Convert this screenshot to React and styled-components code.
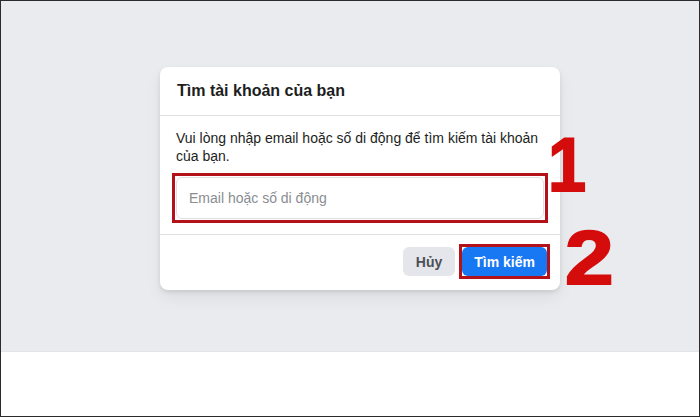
import React from 'react';
import styled, { createGlobalStyle } from 'styled-components';

const GlobalStyle = createGlobalStyle`
  html, body {
    margin: 0;
    padding: 0;
    background: #fff;
  }
  body {
    font-family: "Liberation Sans", Arial, Helvetica, sans-serif;
  }
`;

const Frame = styled.div`
  width: 700px;
  height: 417px;
  box-sizing: border-box;
  border: 1px solid #2b2b2b;
  display: flex;
  flex-direction: column;
  overflow: hidden;
`;

const Stage = styled.div`
  height: 351px;
  background: #e9ebee;
  border-bottom: 1px solid #e2e4e8;
  display: flex;
  justify-content: center;
  align-items: flex-start;
  padding: 66px 0 0 20px;
  box-sizing: border-box;
`;

const Blank = styled.div`
  flex: 1;
  background: #fff;
`;

const Anchor = styled.div`
  position: relative;
`;

const Card = styled.div`
  width: 400px;
  background: #fff;
  border-radius: 8px;
  box-shadow: 0 2px 4px rgba(0, 0, 0, 0.1), 0 8px 16px rgba(0, 0, 0, 0.06);
`;

const Header = styled.div`
  height: 48px;
  padding: 0 17px;
  display: flex;
  align-items: center;
  border-bottom: 1px solid #dddfe2;
`;

const Title = styled.h2`
  margin: 0;
  font-size: 16px;
  font-weight: bold;
  color: #1c1e21;
`;

const Body = styled.div`
  padding: 13px 16px 15px;
  border-bottom: 1px solid #dddfe2;
`;

const Text = styled.p`
  margin: 0 0 12px;
  font-size: 14px;
  line-height: 18px;
  color: #1c1e21;
`;

const Highlight = styled.div`
  border: 3px solid ${p => p.$color || '#b3121b'};
  padding: ${p => p.$gap || '1px'};
  margin: ${p => p.$out || '-4px'};
`;

const Input = styled.input`
  display: block;
  width: 100%;
  box-sizing: border-box;
  height: 42px;
  padding: 0 12px;
  font-family: inherit;
  font-size: 14px;
  color: #1c1e21;
  border: 1px solid #dddfe2;
  border-radius: 6px;
  outline: none;
  &::placeholder {
    color: #8a8d91;
  }
`;

const Footer = styled.div`
  display: flex;
  justify-content: flex-end;
  align-items: center;
  gap: 4px;
  padding: 12px 13px 14px 16px;
`;

const Button = styled.button`
  height: 29px;
  padding: 0 ${p => (p.$primary ? '12px' : '13px')};
  border: none;
  border-radius: 6px;
  font-family: inherit;
  font-size: 14px;
  font-weight: bold;
  cursor: pointer;
  background: ${p => (p.$primary ? '#1877f2' : '#e4e6eb')};
  color: ${p => (p.$primary ? '#fff' : '#4b4f56')};
`;

const StepNumber = styled.span`
  position: absolute;
  left: ${p => p.$x}px;
  top: ${p => p.$y}px;
  font-family: "Liberation Sans", Arial, sans-serif;
  font-weight: bold;
  font-size: 76px;
  line-height: 1;
  color: #d40c0c;
  -webkit-text-stroke: 2px #d40c0c;
  text-shadow: 0 0 1px #f3b0b0;
  transform: scaleX(${p => p.$sx || 1});
  transform-origin: left center;
`;

export default function App() {
  return (
    <>
      <GlobalStyle />
      <Frame>
        <Stage>
          <Anchor>
            <Card>
              <Header>
                <Title>Tìm tài khoản của bạn</Title>
              </Header>
              <Body>
                <Text>Vui lòng nhập email hoặc số di động để tìm kiếm tài khoản của bạn.</Text>
                <Highlight>
                  <Input placeholder="Email hoặc số di động" />
                </Highlight>
              </Body>
              <Footer>
                <Button>Hủy</Button>
                <Highlight $gap="0" $out="-3px -3px -3px 0">
                  <Button $primary>Tìm kiếm</Button>
                </Highlight>
              </Footer>
            </Card>
            <StepNumber $x={388} $y={60} $sx={0.9}>1</StepNumber>
            <StepNumber $x={405} $y={153} $sx={1.15}>2</StepNumber>
          </Anchor>
        </Stage>
        <Blank />
      </Frame>
    </>
  );
}
